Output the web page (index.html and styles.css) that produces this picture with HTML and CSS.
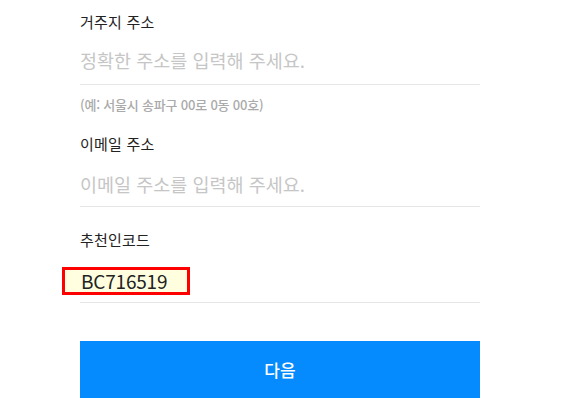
FILE: index.html
```html
<!DOCTYPE html>
<html lang="ko">
<head>
<meta charset="utf-8">
<link rel="stylesheet" href="styles.css">
</head>
<body>
<div class="form">
  <div class="field field-addr">
    <div class="label">거주지 주소</div>
    <div class="input placeholder">정확한 주소를 입력해 주세요.</div>
    <div class="hint">(예: 서울시 송파구 00로 0동 00호)</div>
  </div>
  <div class="field field-email">
    <div class="label">이메일 주소</div>
    <div class="input placeholder">이메일 주소를 입력해 주세요.</div>
  </div>
  <div class="field field-code">
    <div class="label">추천인코드</div>
    <div class="input code-input"><span class="code-value">BC716519</span></div>
  </div>
  <button class="next-btn">다음</button>
</div>
</body>
</html>
```
FILE: styles.css
```css
html, body {
  margin: 0;
  padding: 0;
  background: #fff;
}
body {
  font-family: "Noto Sans CJK KR", "Noto Sans", sans-serif;
  color: #222;
}
.form {
  width: 400px;
  margin-left: 80px;
  padding-top: 11px;
  display: flex;
  flex-direction: column;
}
.label {
  font-size: 15px;
  line-height: 22px;
  height: 22px;
  color: #222;
  letter-spacing: 0.2px;
}
.input {
  border-bottom: 1px solid #e6e6e6;
}
.placeholder {
  font-size: 18.5px;
  line-height: 26px;
  color: #c6c6c6;
  margin-top: 14px;
  padding-bottom: 11px;
}
.hint {
  font-size: 13px;
  font-weight: 500;
  line-height: 18px;
  color: #aaaaaa;
  margin-top: 11px;
  letter-spacing: -0.2px;
}
.field-email {
  margin-top: 19px;
}
.field-email .placeholder {
  margin-top: 16px;
  padding-bottom: 9px;
}
.field-code {
  margin-top: 22px;
}
.code-input {
  margin-top: 16px;
  padding-bottom: 7px;
}
.code-value {
  display: inline-block;
  margin-left: -18px;
  width: 91px;
  height: 22px;
  padding: 0 15px 0 16px;
  border: 3px solid #ff0000;
  background: #ffffe0;
  font-size: 19px;
  line-height: 22px;
  color: #222;
  vertical-align: top;
  letter-spacing: -0.2px;
}
.next-btn {
  margin-top: 38px;
  height: 57px;
  width: 400px;
  border: 0;
  padding: 0;
  background: #068bff;
  color: #fff;
  font-family: "Noto Sans CJK KR", "Noto Sans", sans-serif;
  font-size: 17px;
  font-weight: 500;
}
```
